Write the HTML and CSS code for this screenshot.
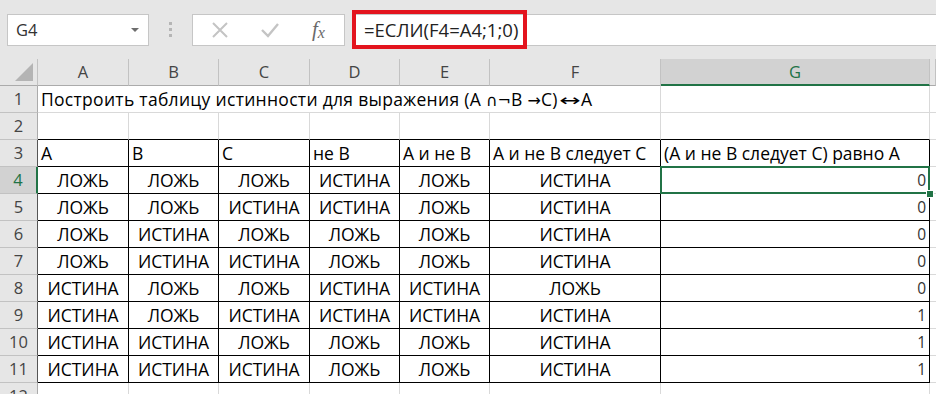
FILE: index.html
```html
<!DOCTYPE html>
<html lang="ru">
<head>
    <meta charset="UTF-8">
    <meta name="viewport" content="width=device-width, initial-scale=1.0">
    <title>Таблица истинности</title>
    <link rel="stylesheet" href="styles.css">
</head>
<body>
    <div class="toolbar">
        <div class="namebox">
            <span>G4</span>
            <span class="caret"></span>
        </div>
        <div class="grip"><i></i><i></i><i></i></div>
        <div class="fnbox">
            <svg class="ico" width="20" height="20" viewBox="0 0 20 20">
                <path d="M3 3 L17 17 M17 3 L3 17" stroke="#c4c4c4" stroke-width="2" fill="none"/>
            </svg>
            <svg class="ico" width="22" height="20" viewBox="0 0 22 20">
                <path d="M3 10 L9 16 L19 4" stroke="#c4c4c4" stroke-width="2.4" fill="none"/>
            </svg>
            <span class="fx">f<sub>x</sub></span>
        </div>
        <div class="formula">
            <span class="formula-text">=ЕСЛИ(F4=A4;1;0)</span>
        </div>
    </div>

    <div class="sheet">
        <div class="row head">
            <div class="corner"><span class="tri"></span></div>
            <div class="colh">A</div>
            <div class="colh">B</div>
            <div class="colh">C</div>
            <div class="colh">D</div>
            <div class="colh">E</div>
            <div class="colh">F</div>
            <div class="colh active">G</div>
            <div class="colh"></div>
        </div>

        <div class="row">
            <div class="rowh">1</div>
            <div class="cell title">Построить таблицу истинности для выражения (A <span class="sym">∩¬</span>B <span class="sym">→</span>C)<span class="sym wide">↔</span>A</div>
            <div class="cell"></div>
            <div class="cell"></div>
        </div>

        <div class="row pre">
            <div class="rowh">2</div>
            <div class="cell"></div><div class="cell"></div><div class="cell"></div><div class="cell"></div>
            <div class="cell"></div><div class="cell"></div><div class="cell"></div><div class="cell"></div>
        </div>

        <div class="row tbl caption">
            <div class="rowh">3</div>
            <div class="cell">A</div>
            <div class="cell">B</div>
            <div class="cell">C</div>
            <div class="cell">не B</div>
            <div class="cell">A и не B</div>
            <div class="cell">A и не B следует C</div>
            <div class="cell">(A и не B следует C) равно A</div>
            <div class="cell"></div>
        </div>

        <div class="row tbl data">
            <div class="rowh active">4</div>
            <div class="cell">ЛОЖЬ</div><div class="cell">ЛОЖЬ</div><div class="cell">ЛОЖЬ</div>
            <div class="cell">ИСТИНА</div><div class="cell">ЛОЖЬ</div><div class="cell">ИСТИНА</div>
            <div class="cell num sel">0</div><div class="cell"></div>
        </div>
        <div class="row tbl data">
            <div class="rowh">5</div>
            <div class="cell">ЛОЖЬ</div><div class="cell">ЛОЖЬ</div><div class="cell">ИСТИНА</div>
            <div class="cell">ИСТИНА</div><div class="cell">ЛОЖЬ</div><div class="cell">ИСТИНА</div>
            <div class="cell num">0</div><div class="cell"></div>
        </div>
        <div class="row tbl data">
            <div class="rowh">6</div>
            <div class="cell">ЛОЖЬ</div><div class="cell">ИСТИНА</div><div class="cell">ЛОЖЬ</div>
            <div class="cell">ЛОЖЬ</div><div class="cell">ЛОЖЬ</div><div class="cell">ИСТИНА</div>
            <div class="cell num">0</div><div class="cell"></div>
        </div>
        <div class="row tbl data">
            <div class="rowh">7</div>
            <div class="cell">ЛОЖЬ</div><div class="cell">ИСТИНА</div><div class="cell">ИСТИНА</div>
            <div class="cell">ЛОЖЬ</div><div class="cell">ЛОЖЬ</div><div class="cell">ИСТИНА</div>
            <div class="cell num">0</div><div class="cell"></div>
        </div>
        <div class="row tbl data">
            <div class="rowh">8</div>
            <div class="cell">ИСТИНА</div><div class="cell">ЛОЖЬ</div><div class="cell">ЛОЖЬ</div>
            <div class="cell">ИСТИНА</div><div class="cell">ИСТИНА</div><div class="cell">ЛОЖЬ</div>
            <div class="cell num">0</div><div class="cell"></div>
        </div>
        <div class="row tbl data">
            <div class="rowh">9</div>
            <div class="cell">ИСТИНА</div><div class="cell">ЛОЖЬ</div><div class="cell">ИСТИНА</div>
            <div class="cell">ИСТИНА</div><div class="cell">ИСТИНА</div><div class="cell">ИСТИНА</div>
            <div class="cell num">1</div><div class="cell"></div>
        </div>
        <div class="row tbl data">
            <div class="rowh">10</div>
            <div class="cell">ИСТИНА</div><div class="cell">ИСТИНА</div><div class="cell">ЛОЖЬ</div>
            <div class="cell">ЛОЖЬ</div><div class="cell">ЛОЖЬ</div><div class="cell">ИСТИНА</div>
            <div class="cell num">1</div><div class="cell"></div>
        </div>
        <div class="row tbl data">
            <div class="rowh">11</div>
            <div class="cell">ИСТИНА</div><div class="cell">ИСТИНА</div><div class="cell">ИСТИНА</div>
            <div class="cell">ЛОЖЬ</div><div class="cell">ЛОЖЬ</div><div class="cell">ИСТИНА</div>
            <div class="cell num">1</div><div class="cell"></div>
        </div>

        <div class="row">
            <div class="rowh">12</div>
            <div class="cell"></div><div class="cell"></div><div class="cell"></div><div class="cell"></div>
            <div class="cell"></div><div class="cell"></div><div class="cell"></div><div class="cell"></div>
        </div>
    </div>
</body>
</html>
```

FILE: styles.css
```css
body {
    margin: 0;
    width: 936px;
    height: 394px;
    overflow: hidden;
    background-color: #fff;
    font-family: "Open Sans", "Liberation Sans", sans-serif;
    color: #000;
}

/* formula bar */
.toolbar {
    display: flex;
    align-items: center;
    height: 59px;
    padding-left: 7px;
    background-color: #e6e6e6;
    box-sizing: border-box;
}

.namebox {
    display: flex;
    align-items: center;
    justify-content: space-between;
    width: 142px;
    height: 32px;
    padding: 0 9px 0 8px;
    box-sizing: border-box;
    background-color: #fff;
    border: 1px solid #c6c6c6;
    font-size: 16.5px;
    color: #333;
}

.caret {
    width: 0;
    height: 0;
    border-left: 4px solid transparent;
    border-right: 4px solid transparent;
    border-top: 4px solid #6d6d6d;
}

.grip {
    display: flex;
    flex-direction: column;
    gap: 3px;
    margin: 0 20px 0 20px;
}

.grip i {
    display: block;
    width: 3px;
    height: 3px;
    background-color: #b5b5b5;
}

.fnbox {
    display: flex;
    align-items: center;
    width: 153px;
    height: 32px;
    box-sizing: border-box;
    padding-left: 17px;
    gap: 29px;
    background-color: #fff;
    border: 1px solid #c6c6c6;
}

.fx {
    font-family: "Liberation Serif", serif;
    font-style: italic;
    font-size: 21px;
    color: #6a6a6a;
    margin-left: 2px;
}

.fx sub {
    font-size: 16px;
    vertical-align: -2px;
}

.formula {
    display: flex;
    align-items: center;
    flex: 1;
    height: 32px;
    margin-left: 7px;
    box-sizing: border-box;
    background-color: #fff;
    border: 1px solid #c6c6c6;
    border-right: none;
}

.formula-text {
    display: flex;
    align-items: center;
    height: 39px;
    width: 175px;
    margin-left: -1px;
    padding-left: 8px;
    box-sizing: border-box;
    border: 4px solid #e3141e;
    font-size: 18.5px;
    color: #222;
}

/* sheet */
.row {
    display: grid;
    grid-template-columns: 38px 91px 90px 91px 90px 90px 171px 269px 1fr;
    height: 27px;
}

.cell, .rowh, .colh, .corner {
    box-sizing: border-box;
    height: 27px;
    border-right: 1px solid #d9d9d9;
    border-bottom: 1px solid #d9d9d9;
    font-size: 17.5px;
    line-height: 26px;
    white-space: nowrap;
}

.cell {
    padding: 0 3px;
}

.head .colh, .corner, .rowh {
    font-size: 16.5px;
}

.head .colh, .corner {
    background-color: #e6e6e6;
    border-right-color: #c2c2c2;
    border-bottom-color: #ababab;
    text-align: center;
    color: #444;
}

.corner {
    position: relative;
}

.tri {
    position: absolute;
    right: 4px;
    bottom: 4px;
    width: 0;
    height: 0;
    border-left: 18px solid transparent;
    border-bottom: 18px solid #b4b4b4;
}

.head .colh.active {
    background-color: #d2d2d2;
    color: #217346;
    border-bottom: 2px solid #217346;
}

.rowh {
    background-color: #e6e6e6;
    border-right-color: #ababab;
    border-bottom-color: #c2c2c2;
    text-align: center;
    color: #444;
}

.rowh.active {
    background-color: #d2d2d2;
    color: #217346;
    border-right: 2px solid #217346;
}

.title {
    grid-column: span 6;
    overflow: visible;
    letter-spacing: 0.3px;
}

.sym {
    font-family: "DejaVu Sans", sans-serif;
    font-size: 16px;
    letter-spacing: 0;
}

.sym.wide {
    display: inline-block;
    transform: scaleX(1.6);
    margin: 0 5px;
}

.pre .cell:not(:last-child) {
    border-bottom-color: #000;
}

.tbl .cell:not(:last-child) {
    border-right-color: #000;
    border-bottom-color: #000;
}

.tbl .rowh:not(.active) {
    border-right-color: #555;
}

.data .cell {
    text-align: center;
}

.data .cell.num {
    text-align: right;
    font-size: 15.5px;
    color: #333;
}

.sel {
    position: relative;
}

.sel::after {
    content: "";
    position: absolute;
    left: -1px;
    top: -1px;
    right: -1px;
    bottom: -1px;
    border: 2px solid #217346;
}

.sel::before {
    content: "";
    position: absolute;
    right: -5px;
    bottom: -5px;
    width: 6px;
    height: 6px;
    background-color: #217346;
    border: 1px solid #fff;
    z-index: 1;
}
```
